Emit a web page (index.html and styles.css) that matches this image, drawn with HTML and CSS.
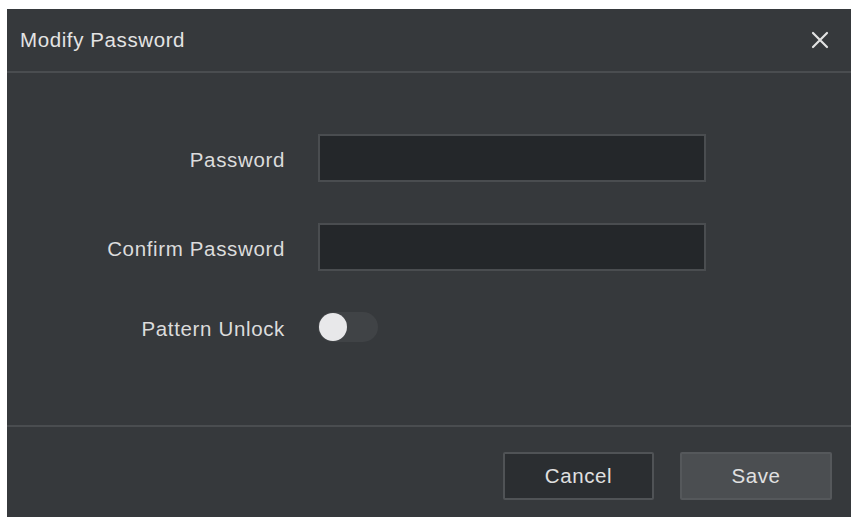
FILE: index.html
```html
<!DOCTYPE html>
<html>
<head>
<meta charset="utf-8">
<link rel="stylesheet" href="styles.css">
</head>
<body>
<div class="dialog">
  <div class="header">
    <span class="title">Modify Password</span>
    <svg class="close" width="18" height="18" viewBox="0 0 18 18"><path d="M2 2L16 16M16 2L2 16" stroke="#e2e2e2" stroke-width="2.2" stroke-linecap="round"/></svg>
  </div>
  <div class="body">
    <div class="form">
      <label class="label">Password</label>
      <div class="input"></div>
      <label class="label">Confirm Password</label>
      <div class="input"></div>
      <label class="label">Pattern Unlock</label>
      <div class="toggle"><span class="knob"></span></div>
    </div>
  </div>
  <div class="footer">
    <button class="btn cancel">Cancel</button>
    <button class="btn save">Save</button>
  </div>
</div>
</body>
</html>
```
FILE: styles.css
```css
html, body {
  margin: 0;
  background: #ffffff;
}
body {
  padding: 9px 2px 1px 7px;
  font-family: "Liberation Sans", Arial, sans-serif;
}
.dialog {
  width: 844px;
  height: 508px;
  background: #36393c;
  display: flex;
  flex-direction: column;
  color: #dedede;
}
.header {
  height: 64px;
  flex: none;
  display: flex;
  align-items: center;
  justify-content: space-between;
  padding: 0 22px 0 13px;
  border-bottom: 2px solid #4a4d50;
  box-sizing: border-box;
}
.title {
  font-size: 20.5px;
  letter-spacing: 0.6px;
  color: #e4e4e4;
}
.close {
  display: block;
}
.body {
  flex: 1;
  padding-top: 61px;
  box-sizing: border-box;
}
.form {
  display: grid;
  grid-template-columns: 278px 388px;
  column-gap: 33px;
  row-gap: 41px;
  align-items: center;
}
.label {
  text-align: right;
  font-size: 20.5px;
  letter-spacing: 0.65px;
  color: #dcdcdc;
  padding-top: 3px;
}
.input {
  height: 48px;
  background: #24272a;
  border: 2px solid #4a4d50;
  box-sizing: border-box;
}
.toggle {
  width: 60px;
  height: 30px;
  border-radius: 15px;
  background: #404346;
  display: flex;
  align-items: center;
  padding-left: 1px;
  box-sizing: border-box;
}
.knob {
  width: 28px;
  height: 28px;
  border-radius: 50%;
  background: #e8e8ea;
}
.footer {
  height: 92px;
  flex: none;
  border-top: 2px solid #4a4d50;
  box-sizing: border-box;
  display: flex;
  justify-content: flex-end;
  align-items: flex-start;
  padding: 25px 19px 0 0;
  gap: 26px;
}
.btn {
  width: 151px;
  height: 48px;
  font-family: "Liberation Sans", Arial, sans-serif;
  font-size: 20.5px;
  letter-spacing: 0.6px;
  color: #e0e0e0;
  border-radius: 2px;
  box-sizing: border-box;
  padding: 0;
}
.cancel {
  background: #2b2e31;
  border: 2px solid #505356;
}
.save {
  background: #4b4e51;
  border: 2px solid #55585b;
  width: 152px;
}
```
